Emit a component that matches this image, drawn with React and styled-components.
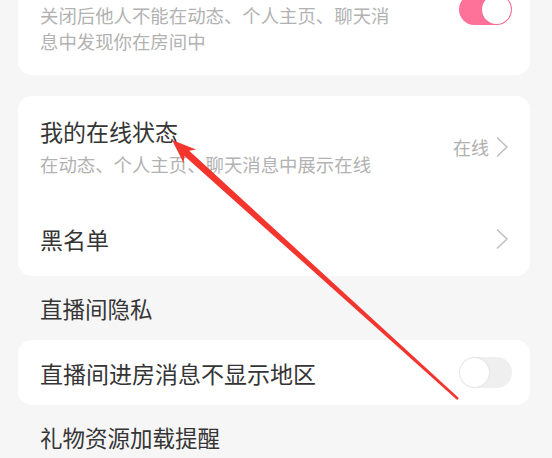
import React from "react";
import styled, { createGlobalStyle } from "styled-components";

const GlobalStyle = createGlobalStyle`
  html, body {
    margin: 0;
    padding: 0;
    background: #f6f6f6;
  }
  body {
    font-family: "Noto Sans CJK SC", "Noto Sans", sans-serif;
    overflow: hidden;
  }
`;

const Page = styled.div`
  position: relative;
  width: 552px;
  height: 458px;
  overflow: hidden;
  background: #f6f6f6;
`;

const Content = styled.div`
  display: flex;
  flex-direction: column;
  margin-top: -10px;
`;

const Card = styled.div`
  margin: ${(props) => props.margin || "0"} 22px 0 18px;
  background: #fff;
  border-radius: 14px;
  display: flex;
  flex-direction: column;
`;

const Row = styled.div`
  display: flex;
  align-items: ${(props) => props.align || "center"};
  justify-content: space-between;
  min-height: ${(props) => props.height || "auto"};
  padding: ${(props) => props.pad || "0 21px 0 22px"};
  box-sizing: border-box;
`;

const TextCol = styled.div`
  display: flex;
  flex-direction: column;
`;

const Title = styled.div`
  font-size: 23px;
  line-height: 30px;
  color: #353535;
  white-space: nowrap;
`;

const Desc = styled.div`
  font-size: 18.4px;
  line-height: 26px;
  color: #b2b2b2;
  margin-top: ${(props) => props.gap || "0"};
  max-width: ${(props) => props.maxw || "none"};
`;

const Section = styled.div`
  height: 64px;
  display: flex;
  align-items: center;
  padding-left: 40px;
  font-size: 22.5px;
  color: #353535;
`;

const Right = styled.div`
  display: flex;
  align-items: center;
  gap: 6px;
  font-size: 18px;
  color: #b0b0b0;
`;

const Toggle = styled.div`
  position: relative;
  width: 53px;
  height: 31px;
  border-radius: 16px;
  background: ${(props) => (props.on ? "#fe7199" : "#efefef")};
  margin: ${(props) => props.margin || "0"};
  flex-shrink: 0;
  display: flex;
  justify-content: ${(props) => (props.on ? "flex-end" : "flex-start")};
  align-items: center;
  padding: 1px;
  box-sizing: border-box;
`;

const Knob = styled.div`
  width: 29px;
  height: 29px;
  border-radius: 50%;
  background: #fff;
  box-shadow: 0 0 2px rgba(0, 0, 0, 0.12);
`;

const Overlay = styled.svg`
  position: absolute;
  left: 0;
  top: 0;
  pointer-events: none;
`;

const Chevron = () => (
  <svg width="14" height="22" viewBox="0 0 14 22">
    <path d="M2 1.5 L12 11 L2 20.5" fill="none" stroke="#bdbdbd" strokeWidth="1.4" />
  </svg>
);

export default function App() {
  return (
    <Page>
      <GlobalStyle />
      <Content>
        <Card>
          <Row align="flex-start" pad="12px 18px 21px 22px">
            <Desc maxw="362px">
              关闭后他人不能在动态、个人主页、聊天消息中发现你在房间中
            </Desc>
            <Toggle on margin="-8px 0 0 0">
              <Knob />
            </Toggle>
          </Row>
        </Card>

        <Card margin="21px">
          <Row height="106px" pad="20px 21px 25px 22px">
            <TextCol>
              <Title>我的在线状态</Title>
              <Desc gap="5px">在动态、个人主页、聊天消息中展示在线</Desc>
            </TextCol>
            <Right>
              在线
              <Chevron />
            </Right>
          </Row>
          <Row height="74px">
            <Title>黑名单</Title>
            <Right>
              <Chevron />
            </Right>
          </Row>
        </Card>

        <Section>直播间隐私</Section>

        <Card>
          <Row height="65px" pad="0 18px 0 22px">
            <Title>直播间进房消息不显示地区</Title>
            <Toggle>
              <Knob />
            </Toggle>
          </Row>
        </Card>

        <Section>礼物资源加载提醒</Section>
      </Content>

      <Overlay width="552" height="458" viewBox="0 0 552 458">
        <polygon
          points="172,140 196,149.4 189.2,150.8 458.8,398.1 457.2,399.9 184.5,156 183.6,163"
          fill="#f4352d"
        />
      </Overlay>
    </Page>
  );
}
